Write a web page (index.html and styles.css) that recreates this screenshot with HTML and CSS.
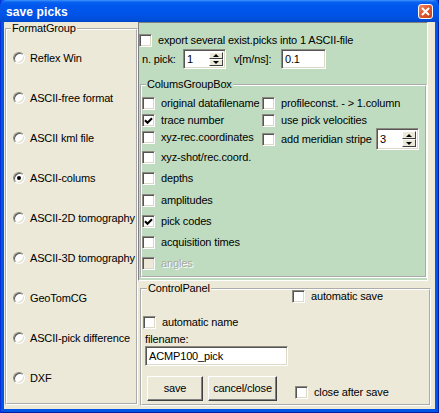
FILE: index.html
```
<!DOCTYPE html>
<html>
<head>
<meta charset="utf-8">
<link rel="stylesheet" href="styles.css">
</head>
<body>
<div class="window">
  <div class="titlebar">
    <span class="title">save picks</span>
    <span class="close"><svg width="9" height="9" viewBox="0 0 9 9"><path d="M1 1L8 8M8 1L1 8" stroke="#fff" stroke-width="2" fill="none"/></svg></span>
  </div>
  <div class="client">
    <fieldset class="group format">
      <legend>FormatGroup</legend>
      <div class="radio-row"><span class="radio"></span><span>Reflex Win</span></div>
      <div class="radio-row"><span class="radio"></span><span>ASCII-free format</span></div>
      <div class="radio-row"><span class="radio"></span><span>ASCII kml file</span></div>
      <div class="radio-row"><span class="radio on"></span><span>ASCII-colums</span></div>
      <div class="radio-row"><span class="radio"></span><span>ASCII-2D tomography</span></div>
      <div class="radio-row"><span class="radio"></span><span>ASCII-3D tomography</span></div>
      <div class="radio-row"><span class="radio"></span><span>GeoTomCG</span></div>
      <div class="radio-row"><span class="radio"></span><span>ASCII-pick difference</span></div>
      <div class="radio-row"><span class="radio"></span><span>DXF</span></div>
    </fieldset>
    <div class="right">
      <div class="green">
        <div class="export-row"><span class="cb"></span><span>export several exist.picks into 1 ASCII-file</span></div>
        <div class="pick-row">
          <span class="lbl-pick">n. pick:</span>
          <span class="spin spin-pick"><span class="spin-val">1</span><span class="spin-btns"><span class="sbtn up"></span><span class="sbtn down"></span></span></span>
          <span class="lbl-v">v[m/ns]:</span>
          <span class="edit edit-v">0.1</span>
        </div>
        <fieldset class="group cols">
          <legend>ColumsGroupBox</legend>
          <div class="cols-body">
            <div class="col-left">
              <div class="cb-list tight">
                <div class="cb-row"><span class="cb"></span><span>original datafilename</span></div>
                <div class="cb-row"><span class="cb"><svg width="9" height="9" viewBox="0 0 9 9"><path d="M1 4.2L3.5 6.7L8 2.2" stroke="#000" stroke-width="2.1" fill="none"/></svg></span><span>trace number</span></div>
                <div class="cb-row"><span class="cb"></span><span>xyz-rec.coordinates</span></div>
              </div>
              <div class="cb-list loose">
                <div class="cb-row"><span class="cb"></span><span>xyz-shot/rec.coord.</span></div>
                <div class="cb-row"><span class="cb"></span><span>depths</span></div>
                <div class="cb-row"><span class="cb"></span><span>amplitudes</span></div>
                <div class="cb-row"><span class="cb"><svg width="9" height="9" viewBox="0 0 9 9"><path d="M1 4.2L3.5 6.7L8 2.2" stroke="#000" stroke-width="2.1" fill="none"/></svg></span><span>pick codes</span></div>
                <div class="cb-row"><span class="cb"></span><span>acquisition times</span></div>
                <div class="cb-row disabled"><span class="cb"></span><span>angles</span></div>
              </div>
            </div>
            <div class="col-right">
              <div class="cb-list tight">
                <div class="cb-row"><span class="cb"></span><span>profileconst. - &gt; 1.column</span></div>
                <div class="cb-row"><span class="cb"></span><span>use pick velocities</span></div>
              </div>
              <div class="cb-row meridian"><span class="cb"></span><span class="lbl-mer">add meridian stripe</span>
                <span class="spin spin-mer"><span class="spin-val">3</span><span class="spin-btns"><span class="sbtn up"></span><span class="sbtn down"></span></span></span>
              </div>
            </div>
          </div>
        </fieldset>
      </div>
      <fieldset class="group control">
        <legend>ControlPanel</legend>
        <div class="cb-row autosave"><span class="cb"></span><span>automatic save</span></div>
        <div class="cb-row autoname"><span class="cb"></span><span>automatic name</span></div>
        <div class="fn-label">filename:</div>
        <div class="edit edit-fn">ACMP100_pick</div>
        <div class="btn-row">
          <span class="btn btn-save">save</span>
          <span class="btn btn-cancel">cancel/close</span>
          <div class="cb-row closeafter"><span class="cb"></span><span>close after save</span></div>
        </div>
      </fieldset>
    </div>
  </div>
</div>
</body>
</html>
```
FILE: styles.css
```
* { box-sizing: border-box; }
html, body { margin: 0; padding: 0; }
body {
  width: 439px;
  height: 413px;
  overflow: hidden;
  font-family: "Liberation Sans", Arial, sans-serif;
  font-size: 11px;
  line-height: 13px;
  letter-spacing: -0.15px;
  color: #000;
}
.window {
  width: 439px;
  height: 413px;
  background: #0055e6;
  box-shadow: inset 1px 0 0 #0831d9, inset -1px 0 0 #001ea0, inset 0 -1px 0 #001ea0;
  display: flex;
  flex-direction: column;
}
.titlebar {
  height: 22px;
  flex: none;
  display: flex;
  align-items: flex-start;
  justify-content: space-between;
  padding: 5px 6px 0 6px;
  background: linear-gradient(to bottom, #3d95ff 0, #0a62f0 2px, #0058ee 5px, #0054e8 14px, #004ed8 20px, #0044c8 22px);
  border-radius: 6px 6px 0 0;
}
.title {
  color: #fff;
  font-weight: bold;
  font-size: 12px;
  line-height: 14px;
  letter-spacing: 0.1px;
}
.close {
  width: 15px;
  height: 15px;
  margin-top: -1px;
  border: 1px solid #fff;
  border-radius: 3px;
  background: linear-gradient(135deg, #f08a66 0, #e05a30 45%, #c8401c 100%);
  display: flex;
  align-items: center;
  justify-content: center;
}
.client {
  flex: 1;
  margin: 0 4px 4px 4px;
  background: #ece9d8;
  display: flex;
}
.group {
  margin: 0;
  border: 2px groove #fff;
  min-width: 0;
}
.group legend {
  padding: 0 1px;
  line-height: 13px;
}
.format {
  width: 133px;
  margin: 0 0 4px 1px;
  padding: 3px 0 0 6px;
}
.format legend { margin-left: -2px; }
.radio-row {
  height: 40px;
  display: flex;
  align-items: center;
}
.radio {
  width: 12px;
  height: 12px;
  flex: none;
  border-radius: 50%;
  background: #fff;
  border: 1px solid;
  border-color: #8d8b80 #fff #fff #8d8b80;
  box-shadow: inset 1px 1px 0 #555, inset -1px -1px 0 #dcd9c8;
  margin-right: 5px;
  display: flex;
  align-items: center;
  justify-content: center;
}
.radio.on::after {
  content: "";
  width: 4px;
  height: 4px;
  border-radius: 50%;
  background: #000;
}
.right {
  width: 293px;
  margin: 0 4px 3px 0;
  display: flex;
  flex-direction: column;
}
.green {
  width: 290px;
  height: 259px;
  flex: none;
  background: #c0dcc0;
  border: 1px solid;
  border-color: #808080 #fff #fff #808080;
  display: flex;
  flex-direction: column;
}
.cb {
  width: 13px;
  height: 13px;
  flex: none;
  background: #fff;
  border: 1px solid;
  border-color: #8d8b80 #fff #fff #8d8b80;
  box-shadow: inset 1px 1px 0 #555, inset -1px -1px 0 #dcd9c8;
  display: flex;
  align-items: center;
  justify-content: center;
  margin-right: 6px;
}
.cb svg { display: block; }
.export-row {
  height: 13px;
  margin-top: 11px;
  display: flex;
  align-items: center;
}
.pick-row {
  height: 20px;
  margin-top: 2px;
  display: flex;
  align-items: center;
}
.lbl-pick { width: 44px; padding-left: 3px; }
.lbl-v { width: 55px; padding-left: 8px; }
.edit {
  background: #fff;
  border: 1px solid;
  border-color: #8d8b80 #fff #fff #8d8b80;
  box-shadow: inset 1px 1px 0 #555, inset -1px -1px 0 #dcd9c8;
  padding-left: 3px;
  display: flex;
  align-items: center;
}
.edit-v { width: 45px; height: 20px; }
.spin {
  background: #fff;
  border: 1px solid;
  border-color: #8d8b80 #fff #fff #8d8b80;
  box-shadow: inset 1px 1px 0 #555, inset -1px -1px 0 #dcd9c8;
  padding: 2px 2px 2px 3px;
  display: flex;
  align-items: stretch;
}
.spin-val { flex: 1; display: flex; align-items: center; }
.spin-btns { width: 14px; display: flex; flex-direction: column; }
.sbtn {
  flex: 1;
  background: #ece9d8;
  border: 1px solid;
  border-color: #fff #404040 #404040 #fff;
  display: flex;
  align-items: center;
  justify-content: center;
}
.sbtn.up::before {
  content: "";
  border-left: 3px solid transparent;
  border-right: 3px solid transparent;
  border-bottom: 3px solid #000;
}
.sbtn.down::before {
  content: "";
  border-left: 3px solid transparent;
  border-right: 3px solid transparent;
  border-top: 3px solid #000;
}
.spin-pick { width: 43px; height: 20px; }
.spin-mer { width: 43px; height: 22px; margin-left: 0; }
.cols {
  margin: 9px 0 2px 1px;
  width: 287px;
  flex: 1;
  padding: 6px 0 0 0;
}
.cols legend { margin-left: 4px; }
.cols-body { display: flex; }
.col-left { width: 120px; flex: none; }
.col-right { flex: 1; }
.cb-list { display: flex; flex-direction: column; }
.cb-list.tight { gap: 4px; }
.cb-list.loose { gap: 8.3px; margin-top: 7px; }
.cb-row {
  height: 13px;
  display: flex;
  align-items: center;
  white-space: nowrap;
}
.cb-row.disabled .cb { background: #ece9d8; }
.cb-row.disabled span:last-child { color: #aca899; text-shadow: 1px 1px 0 #fff; }
.meridian { height: 22px; margin-top: 1px; }
.lbl-mer { width: 95px; }
.control {
  margin: 1px 0 0 2px;
  width: 291px;
  flex: 1;
  padding: 0 0 0 1px;
  display: flex;
  flex-direction: column;
}
.control legend { margin-left: 4px; }
.autosave { margin: -5px 0 0 149px; }
.autoname { margin-top: 13px; }
.fn-label { margin: 4px 0 0 2px; height: 13px; }
.edit-fn { width: 143px; height: 20px; margin-left: 2px; }
.btn-row {
  margin-top: 10px;
  display: flex;
  align-items: flex-end;
}
.btn {
  height: 25px;
  background: #ece9d8;
  border: 1px solid;
  border-color: #fff #404040 #404040 #fff;
  box-shadow: inset -1px -1px 0 #808080;
  display: flex;
  align-items: center;
  justify-content: center;
}
.btn-save { width: 56px; margin-left: 4px; }
.btn-cancel { width: 69px; margin-left: 5px; }
.closeafter { margin: 0 0 2px 18px; }
```
